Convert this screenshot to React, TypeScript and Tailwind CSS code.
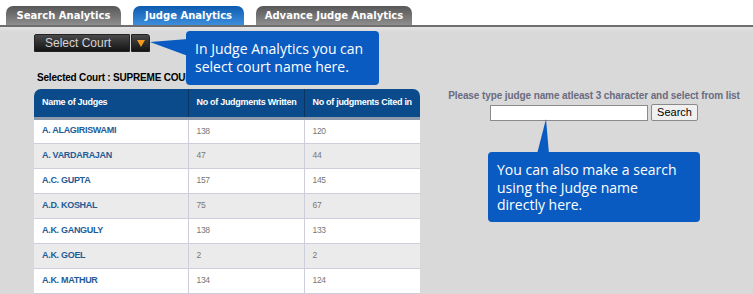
const judges = [
  { name: 'A. ALAGIRISWAMI', written: 138, cited: 120 },
  { name: 'A. VARDARAJAN', written: 47, cited: 44 },
  { name: 'A.C. GUPTA', written: 157, cited: 145 },
  { name: 'A.D. KOSHAL', written: 75, cited: 67 },
  { name: 'A.K. GANGULY', written: 138, cited: 133 },
  { name: 'A.K. GOEL', written: 2, cited: 2 },
  { name: 'A.K. MATHUR', written: 134, cited: 124 },
];

const tabs = [
  { label: 'Search Analytics', width: 'w-[115px]', active: false },
  { label: 'Judge Analytics', width: 'w-[111px]', active: true },
  { label: 'Advance Judge Analytics', width: 'w-[156px]', active: false },
];

export default function App() {
  return (
    <div className="relative w-[753px] h-[294px] overflow-hidden bg-white font-['Liberation_Sans',Arial,sans-serif]">
      {/* tabs */}
      <div className="flex items-end gap-[12px] h-[27px] pl-[6px] border-b-2 border-[#6e6e6e]">
        {tabs.map((t) => (
          <div
            key={t.label}
            className={`${t.width} h-[19px] rounded-t-[7px] flex items-center justify-center text-[10px] font-bold text-white font-['DejaVu_Sans',Verdana,sans-serif] ${
              t.active
                ? 'bg-gradient-to-b from-[#0c5bb0] to-[#3d8fdc]'
                : 'bg-gradient-to-b from-[#575757] to-[#8e8e8e]'
            }`}
          >
            {t.label}
          </div>
        ))}
      </div>

      <div className="flex h-full bg-gradient-to-b from-[#e4e4e4] to-[#d9d9d9] to-[5px]">
        {/* left column */}
        <div className="w-[420px] pl-[34px] pt-[7px]">
          <div className="flex h-[18px] w-[116px]">
            <div className="w-[96px] h-full rounded-tl-[2px] bg-gradient-to-b from-[#4a4a4a] to-[#151515] border border-[#222] flex items-center pl-[10px] text-[12px] text-[#d4d4d4]">
              Select Court
            </div>
            <div className="w-[19px] h-full ml-px rounded-tr-[3px] bg-gradient-to-b from-[#4a4a4a] to-[#151515] border border-[#222] flex items-center justify-center">
              <svg width="8" height="7" viewBox="0 0 8 7">
                <polygon points="0,0 8,0 4,7" fill="#f39a1e" />
              </svg>
            </div>
          </div>

          <div className="mt-[18px] pl-[3px] text-[10px] font-bold text-black tracking-[-0.2px]">
            Selected Court : SUPREME COURT
          </div>

          <table className="mt-[4px] w-[386px] border-collapse text-[9px] tracking-[-0.3px]">
            <thead>
              <tr className="h-[29px] bg-[#0b4a8b] text-white font-bold text-left">
                <th className="w-[154px] pl-[8px] rounded-tl-[7px] border-b-[3px] border-b-[#8d9aab] border-r border-r-[#0a3560]">
                  Name of Judges
                </th>
                <th className="w-[116px] pl-[8px] border-b-[3px] border-b-[#8d9aab] border-r border-r-[#0a3560]">
                  No of Judgments Written
                </th>
                <th className="pl-[8px] rounded-tr-[7px] border-b-[3px] border-b-[#8d9aab]">
                  No of judgments Cited in
                </th>
              </tr>
            </thead>
            <tbody>
              {judges.map((j, i) => (
                <tr key={j.name} className={`h-[25px] ${i % 2 ? 'bg-[#ebebeb]' : 'bg-white'}`}>
                  <td className="pl-[8px] font-bold text-[#1f5c97] border-b border-r border-[#cdcddb]">{j.name}</td>
                  <td className="pl-[8px] text-[8.5px] text-[#777] border-b border-r border-[#cdcddb]">{j.written}</td>
                  <td className="pl-[8px] text-[8.5px] text-[#777] border-b border-[#cdcddb]">{j.cited}</td>
                </tr>
              ))}
            </tbody>
          </table>
        </div>

        {/* right column */}
        <div className="flex-1 ml-[15px] pt-[61px] flex flex-col items-center">
          <div className="text-[10px] font-bold text-[#6b6b80] tracking-[-0.1px]">
            Please type judge name atleast 3 character and select from list
          </div>
          <div className="flex items-center gap-[3px] mt-[1px]">
            <input className="w-[158px] h-[16px] bg-white border border-[#8a8a8a] outline-none" />
            <button className="h-[17px] px-[5px] bg-[#f0f0f0] border border-[#8a8a8a] rounded-[2px] text-[11px] text-black leading-none">
              Search
            </button>
          </div>
        </div>
      </div>

      {/* tooltip pointers */}
      <svg className="absolute left-0 top-0 pointer-events-none" width="753" height="294">
        <polygon points="150,42 188,39 188,56" fill="#0a5bc1" />
        <polygon points="546,119 537,154 549,154" fill="#0a5bc1" />
      </svg>

      {/* tooltips */}
      <div className="absolute left-[186px] top-[31px] w-[193px] h-[54px] rounded-[4px] bg-[#0a5bc1] pl-[9px] pt-[9px] text-[14px] leading-[17.5px] text-white font-['Open_Sans',sans-serif]">
        In Judge Analytics you can
        <br />
        select court name here.
      </div>
      <div className="absolute left-[488px] top-[152px] w-[212px] h-[70px] rounded-[4px] bg-[#0a5bc1] pl-[9px] pt-[9px] text-[14px] leading-[17.5px] text-white font-['Open_Sans',sans-serif]">
        You can also make a search
        <br />
        using the Judge name
        <br />
        directly here.
      </div>
    </div>
  );
}
